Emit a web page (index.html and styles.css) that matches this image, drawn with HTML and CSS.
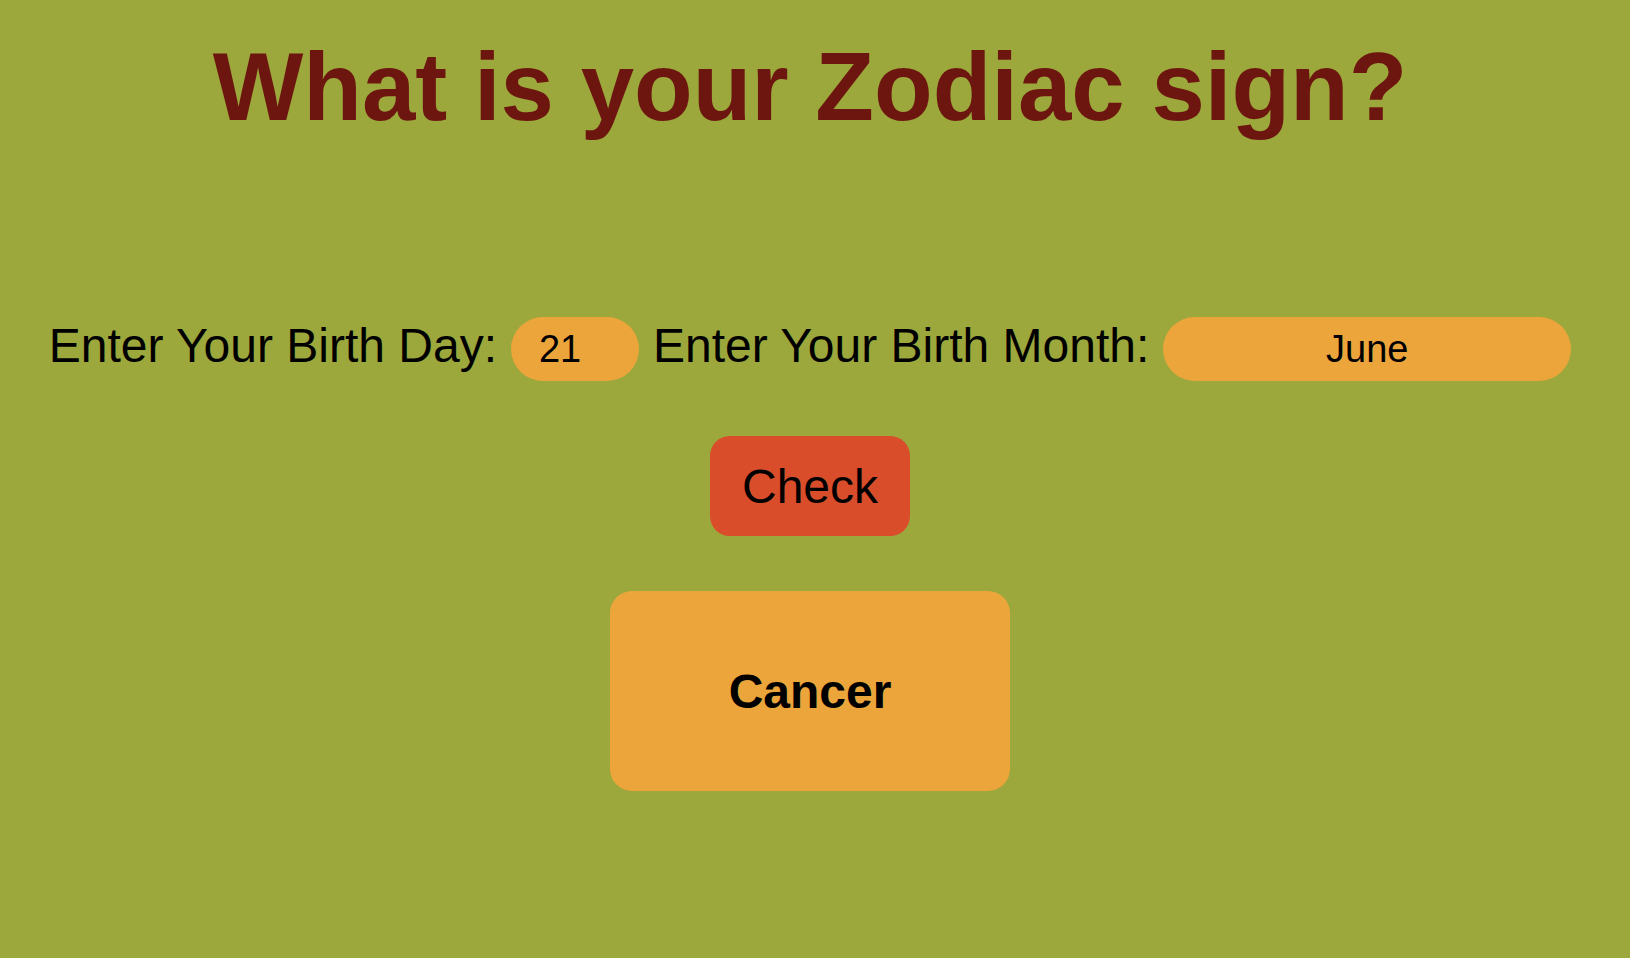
FILE: index.html
```html
<!DOCTYPE html>
<html lang="en">
<head>
<meta charset="utf-8">
<title>Zodiac</title>
<link rel="stylesheet" href="styles.css">
</head>
<body>
<main class="page">
  <h1 class="title">What is your Zodiac sign?</h1>
  <form class="form-row">
    <label class="label" for="day">Enter Your Birth Day:</label>
    <input class="field field-day" id="day" type="text" value="21">
    <label class="label" for="month">Enter Your Birth Month:</label>
    <input class="field field-month" id="month" type="text" value="June">
  </form>
  <button class="check" type="button">Check</button>
  <div class="result">Cancer</div>
</main>
</body>
</html>
```
FILE: styles.css
```css
html, body {
  background: #9ca73c;
}
body {
  margin: 8px 18px 8px 8px;
  font-family: "Liberation Sans", Arial, sans-serif;
  color: #000;
}
.page {
  display: flex;
  flex-direction: column;
  align-items: center;
}
.title {
  margin: 24px 0 0;
  font-size: 96px;
  font-weight: 700;
  color: #6d1610;
  line-height: normal;
}
.form-row {
  margin-top: 175px;
  display: flex;
  align-items: baseline;
  gap: 14px;
}
.label {
  font-size: 48px;
  line-height: normal;
}
.field {
  height: 64px;
  box-sizing: border-box;
  border: none;
  outline: none;
  background: #eca53b;
  border-radius: 32px;
  font-family: "Liberation Sans", Arial, sans-serif;
  font-size: 38px;
  color: #000;
  margin: 0;
}
.field-day {
  width: 128px;
  padding: 0 0 0 28px;
}
.field-month {
  width: 408px;
  padding: 0;
  text-align: center;
}
.check {
  margin-top: 55px;
  width: 200px;
  height: 100px;
  border: none;
  border-radius: 20px;
  background: #d94d2b;
  font-family: "Liberation Sans", Arial, sans-serif;
  font-size: 48px;
  color: #000;
  padding: 0;
}
.result {
  margin-top: 55px;
  width: 400px;
  height: 200px;
  border-radius: 22px;
  background: #eca53b;
  display: flex;
  align-items: center;
  justify-content: center;
  font-size: 48px;
  font-weight: 700;
}
```
